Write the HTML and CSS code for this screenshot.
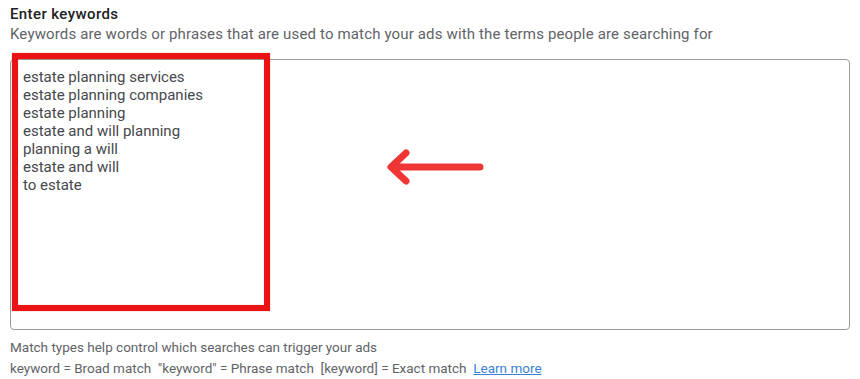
FILE: index.html
```html
<!DOCTYPE html>
<html lang="en">
<head>
<meta charset="utf-8">
<title>Enter keywords</title>
<link rel="stylesheet" href="styles.css">
</head>
<body>
<div class="page">
  <div class="title">Enter keywords</div>
  <div class="subtitle">Keywords are words or phrases that are used to match your ads with the terms people are searching for</div>
  <div class="box">
    <div class="keywords">
      <div>estate planning services</div>
      <div>estate planning companies</div>
      <div>estate planning</div>
      <div>estate and will planning</div>
      <div>planning a will</div>
      <div>estate and will</div>
      <div>to estate</div>
    </div>
  </div>
  <div class="help">Match types help control which searches can trigger your ads</div>
  <div class="help">keyword = Broad match&nbsp; "keyword" = Phrase match&nbsp; [keyword] = Exact match&nbsp; <a class="learn" href="#">Learn more</a></div>
  <div class="highlight"></div>
  <svg class="arrow" width="110" height="40" viewBox="0 0 110 40">
    <path d="M96 21 H8 M22 7 L7 21 L22 35" fill="none" stroke="#ef3535" stroke-width="7" stroke-linecap="round" stroke-linejoin="round"/>
  </svg>
</div>
</body>
</html>
```
FILE: styles.css
```css
html, body {
  margin: 0;
  padding: 0;
  background: #ffffff;
}
.page {
  position: relative;
  width: 860px;
  height: 379px;
  padding: 4px 0 0 10px;
  box-sizing: border-box;
  font-family: Roboto, "Liberation Sans", sans-serif;
  display: flex;
  flex-direction: column;
}
.title {
  font-size: 15px;
  font-weight: 500;
  letter-spacing: 0.4px;
  line-height: 20px;
  color: #202124;
}
.subtitle {
  font-size: 15px;
  letter-spacing: 0.15px;
  line-height: 20px;
  color: #5f6368;
}
.box {
  margin-top: 15px;
  width: 840px;
  height: 271px;
  box-sizing: border-box;
  border: 1px solid #9a9a9a;
  border-radius: 4px;
  padding: 8px 0 0 12px;
}
.keywords {
  font-size: 15px;
  line-height: 18px;
  color: #45484c;
}
.help {
  font-size: 13.5px;
  line-height: 21px;
  color: #5f6368;
}
.box + .help {
  margin-top: 7px;
}
.learn {
  color: #3b82d6;
  text-decoration: underline;
}
.highlight {
  position: absolute;
  left: 12px;
  top: 53px;
  width: 258px;
  height: 258px;
  box-sizing: border-box;
  border: 6px solid #ea1212;
  box-shadow: 0 0 1px rgba(234, 18, 18, 0.5), inset 0 0 1px rgba(234, 18, 18, 0.5);
}
.arrow {
  position: absolute;
  left: 384px;
  top: 146px;
}
```
